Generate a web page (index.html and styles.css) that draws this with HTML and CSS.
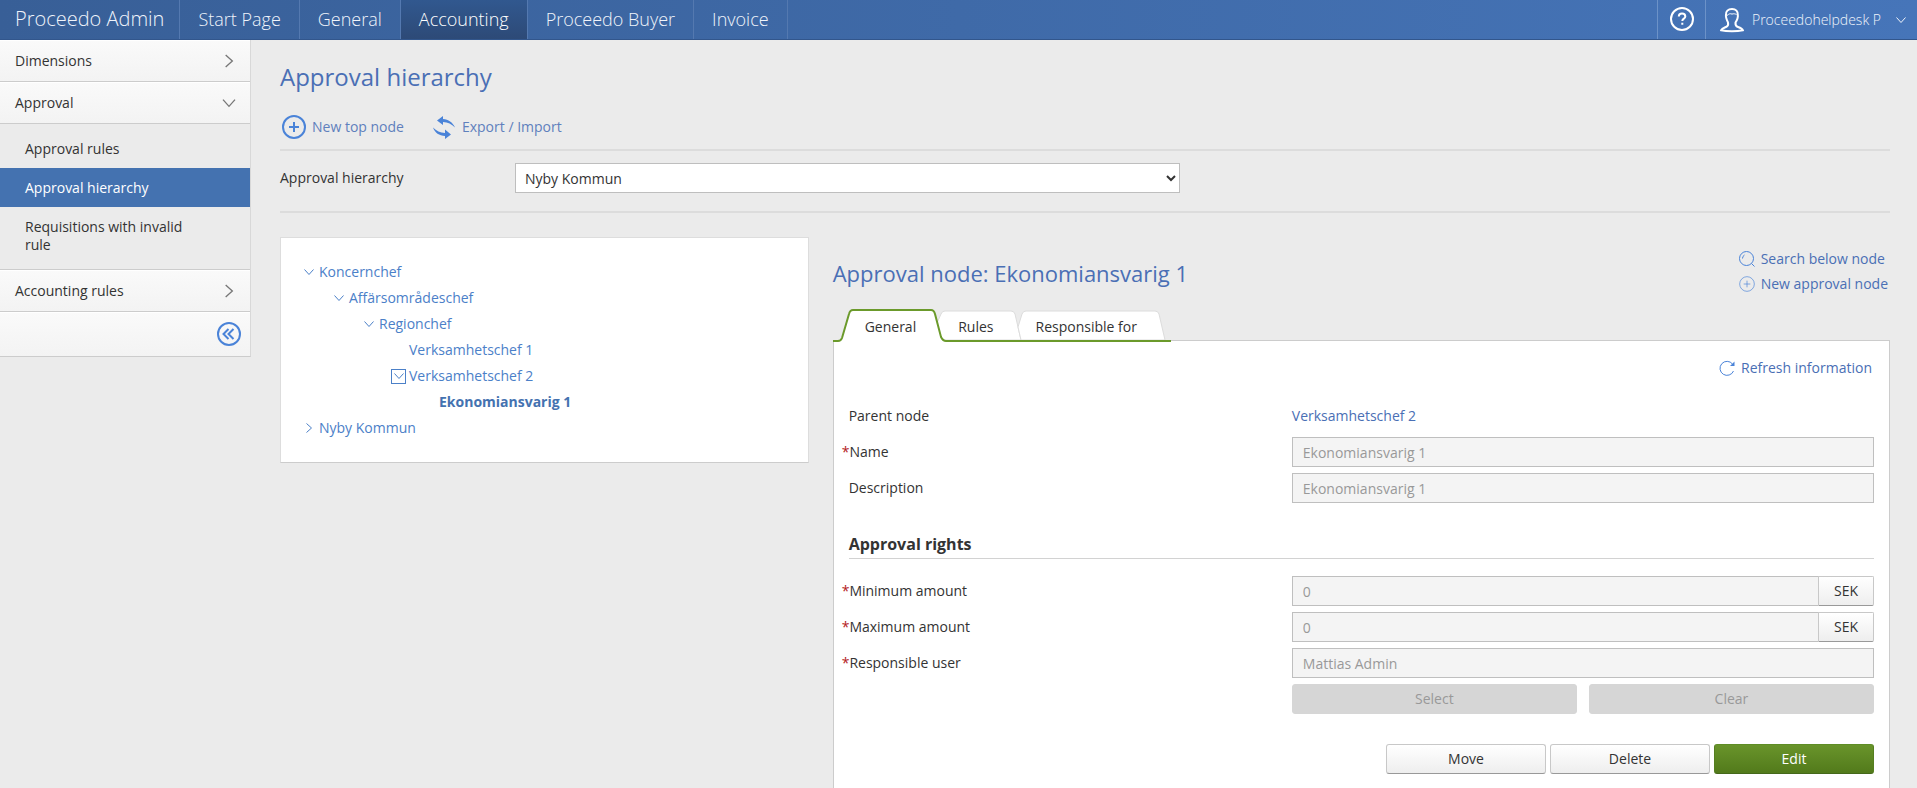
FILE: index.html
```html
<!DOCTYPE html>
<html lang="en">
<head>
<meta charset="utf-8">
<title>Approval hierarchy - Proceedo Admin</title>
<link rel="stylesheet" href="styles.css">
</head>
<body>
<svg class="sprite" aria-hidden="true">
  <symbol id="down" viewBox="0 0 12 12"><path d="M1.5 3.5 6 8.5l4.500-5"/></symbol>
  <symbol id="right" viewBox="0 0 12 12"><path d="M3.500 1.500 8.500 6l-5 4.500"/></symbol>
  <symbol id="plus" viewBox="0 0 24 24"><circle cx="12" cy="12" r="11"/><path d="M12 7v10M7 12h10"/></symbol>
</svg>
<header class="topbar">
  <a class="brand" href="#">Proceedo Admin</a>
  <nav class="topnav" aria-label="Main">
    <a href="#">Start Page</a>
    <a href="#">General</a>
    <a class="current" href="#" aria-current="page">Accounting</a>
    <a href="#">Proceedo Buyer</a>
    <a href="#">Invoice</a>
  </nav>
  <button class="help" type="button" aria-label="Help">
    <svg class="icon-24" viewBox="0 0 24 24"><circle cx="12" cy="12" r="11"/><path d="M8.800 9.500C8.800 7.600 10.200 6.500 12 6.500s3.300 1.200 3.300 2.900c0 2.200-3 2.300-3 4.600M12.300 15.800v2"/></svg>
  </button>
  <button class="user" type="button">
    <svg class="icon-24" viewBox="0 0 24 24"><path d="M8 14.500C6.500 11.500 5.500 9 6 6.800 5.600 3.500 8 1 12 1s6 2.500 5.800 5.800c.4 2.400-.6 5-2.300 7.700-.3 2.500.2 3.700 2.500 4.500 2.500.9 4.200 1.600 4.800 3.200-3 .7-6.500 1-10.800 1s-8-.3-10.800-1C1.800 20.500 3.500 20 6 19c2.200-.8 2.600-2 2-4.500z"/><path class="thin" d="M7 7.500c2-1.700 3-2.200 5-1.400 1.800-.6 3-.3 4.500.4"/></svg>
    <span>Proceedohelpdesk P</span>
    <svg class="icon-12 user-arrow"><use href="#down"/></svg>
  </button>
</header>

<div class="page">
  <nav class="sidebar" aria-label="Accounting">
    <button class="side-item" type="button">Dimensions<svg class="icon-16"><use href="#right"/></svg></button>
    <button class="side-item" type="button" aria-expanded="true">Approval<svg class="icon-16"><use href="#down"/></svg></button>
    <div class="submenu">
      <a href="#">Approval rules</a>
      <a class="active" href="#">Approval hierarchy</a>
      <a href="#">Requisitions with invalid rule</a>
    </div>
    <button class="side-item" type="button">Accounting rules<svg class="icon-16"><use href="#right"/></svg></button>
    <div class="side-foot">
      <button class="collapse" type="button" aria-label="Collapse menu">
        <svg class="icon-24" viewBox="0 0 24 24"><circle cx="12" cy="12" r="11"/><path d="M11.500 7 6.500 12l5 5M16.500 7l-5 5 5 5"/></svg>
      </button>
    </div>
  </nav>

  <main class="main">
    <h1>Approval hierarchy</h1>
    <div class="toolbar">
      <button class="action" type="button"><svg class="icon-24"><use href="#plus"/></svg>New top node</button>
      <button class="action" type="button"><svg class="icon-24 sync" viewBox="0 0 24 24"><path d="M5 5.500 11 1v3c5.500.5 9.500 3 12 8.500C19.500 9 16 7.300 11 7v3z"/><path d="M19 19.500 13 24v-3C7 20.500 3 18 1 12.500 4.500 16 8 17.700 13 18v-3.500z"/></svg>Export / Import</button>
    </div>
    <div class="picker">
      <label for="hierarchy">Approval hierarchy</label>
      <select id="hierarchy"><option>Nyby Kommun</option></select>
    </div>

    <div class="columns">
      <ul class="tree">
        <li class="level-0"><button class="toggle" type="button" aria-label="Collapse"><svg class="icon-12"><use href="#down"/></svg></button><a href="#">Koncernchef</a></li>
        <li class="level-1"><button class="toggle" type="button" aria-label="Collapse"><svg class="icon-12"><use href="#down"/></svg></button><a href="#">Affärsområdeschef</a></li>
        <li class="level-2"><button class="toggle" type="button" aria-label="Collapse"><svg class="icon-12"><use href="#down"/></svg></button><a href="#">Regionchef</a></li>
        <li class="level-3"><span class="toggle"></span><a href="#">Verksamhetschef 1</a></li>
        <li class="level-3"><button class="toggle boxed" type="button" aria-label="Collapse"><svg class="icon-12"><use href="#down"/></svg></button><a href="#">Verksamhetschef 2</a></li>
        <li class="level-4"><span class="toggle"></span><a class="selected" href="#">Ekonomiansvarig 1</a></li>
        <li class="level-0"><button class="toggle" type="button" aria-label="Expand"><svg class="icon-12"><use href="#right"/></svg></button><a href="#">Nyby Kommun</a></li>
      </ul>

      <section class="node">
        <div class="node-head">
          <h2>Approval node: Ekonomiansvarig 1</h2>
          <div class="node-links">
            <a href="#"><svg class="icon-16" viewBox="0 0 16 16"><circle cx="7.500" cy="7.500" r="7"/><path d="M12.500 12.500l3 3M3.500 7.500a4 4 0 0 1 2-3.500"/></svg>Search below node</a>
            <a href="#"><svg class="icon-16"><use href="#plus"/></svg>New approval node</a>
          </div>
        </div>
        <div class="tabs" role="tablist">
          <svg class="tab-shape" viewBox="0 0 338 33" width="338" height="33" aria-hidden="true">
            <path class="tab-idle" d="M104 31V14L108 5Q109 2 112 2H178Q181 2 182 5L188 31z"/>
            <path class="tab-idle" d="M188 31 185 18 189 5Q190 2 193 2H322Q325 2 326 5L332 31z"/>
            <path class="tab-live" d="M0 32H5Q8 32 9 29L16 5Q17 1 20 1H98Q101 1 102 5L108 28Q110 32 113 32H338"/>
          </svg>
          <button type="button" role="tab" aria-selected="true">General</button>
          <button type="button" role="tab" aria-selected="false">Rules</button>
          <button type="button" role="tab" aria-selected="false">Responsible for</button>
        </div>
        <form class="panel">
          <a class="refresh" href="#"><svg class="icon-16" viewBox="0 0 16 16"><path d="M13.500 4A7 7 0 1 0 14.500 11"/><path class="solid" d="M15.500 1.500v4.500h-4.500z"/></svg>Refresh information</a>
          <div class="row"><span>Parent node</span><a href="#">Verksamhetschef 2</a></div>
          <div class="row"><label class="required" for="name">Name</label><input id="name" type="text" value="Ekonomiansvarig 1" disabled></div>
          <div class="row"><label for="desc">Description</label><input id="desc" type="text" value="Ekonomiansvarig 1" disabled></div>
          <h3>Approval rights</h3>
          <div class="row"><label class="required" for="min">Minimum amount</label><div class="money"><input id="min" type="text" value="0" disabled><button class="btn" type="button">SEK</button></div></div>
          <div class="row"><label class="required" for="max">Maximum amount</label><div class="money"><input id="max" type="text" value="0" disabled><button class="btn" type="button">SEK</button></div></div>
          <div class="row"><label class="required" for="resp">Responsible user</label><input id="resp" type="text" value="Mattias Admin" disabled></div>
          <div class="row"><span></span><div class="pair"><button class="btn" type="button" disabled>Select</button><button class="btn" type="button" disabled>Clear</button></div></div>
          <div class="actions">
            <button class="btn" type="button">Move</button>
            <button class="btn" type="button">Delete</button>
            <button class="btn primary" type="button">Edit</button>
          </div>
        </form>
      </section>
    </div>
  </main>
</div>
</body>
</html>
```

FILE: styles.css
```css
* { box-sizing: border-box; }

body {
  margin: 0;
  min-height: 100vh;
  display: flex;
  flex-direction: column;
  background: #ebebeb;
  color: #333;
  font: 14px/18px "Open Sans", "Noto Sans", sans-serif;
}

button, input, select { font: inherit; color: inherit; }
button { border: 0; padding: 0; background: none; cursor: pointer; }
a { color: #4a6fb5; text-decoration: none; }
h1, h2, h3 { margin: 0; }

svg { flex: none; fill: none; stroke: currentColor; overflow: visible; }
.sprite { position: absolute; width: 0; height: 0; }
.icon-12 { width: 12px; height: 12px; }
.icon-16 { width: 16px; height: 16px; }
.icon-24 { width: 24px; height: 24px; stroke-width: 2; }
.thin { stroke-width: 1; }

/* Top bar */
.topbar {
  display: flex;
  height: 40px;
  border-bottom: 1px solid #32568c;
  background: linear-gradient(90deg, #385f97, #4675b9);
  color: #e8eef8;
}
.brand, .topnav a {
  display: flex;
  align-items: center;
  padding-bottom: 2px;
  color: #f0f4fb;
  font-weight: 300;
  border-right: 1px solid #5479b0;
}
.brand { padding: 0 15px 2px; font-size: 20px; }
.topnav { display: flex; flex: 1; font-size: 18px; }
.topnav a { padding: 0 18px 2px; }
.topnav .current { background: linear-gradient(#31588f, #2d4a77); color: #fff; }
.help, .user {
  display: flex;
  align-items: center;
  border-left: 1px solid #6c92c8;
}
.help { padding: 0 11px 1px 12px; color: #fff; }
.user { gap: 8px; padding: 0 10px 0 14px; font-weight: 300; color: #f0f4fb; }
.user > .icon-24 { color: #fff; }
.user-arrow { margin-left: 6px; }

/* Layout */
.page { display: flex; flex: 1; align-items: stretch; }

.sidebar {
  align-self: flex-start;
  flex: none;
  width: 251px;
  border-right: 1px solid #d8d8d8;
  border-bottom: 1px solid #ccc;
}
.side-item, .side-foot {
  display: flex;
  align-items: center;
  justify-content: space-between;
  width: 100%;
  background: linear-gradient(#fafafa, #f3f3f3);
  box-shadow: inset 0 1px #fff;
}
.side-item { height: 42px; padding: 0 13px 0 15px; border-bottom: 1px solid #ccc; }
.side-item svg { color: #777; stroke-width: 1; }
.side-foot { height: 44px; padding: 0 9px; justify-content: flex-end; }
.collapse { display: flex; color: #4a83d8; }
.submenu { padding: 5px 0; border-bottom: 1px solid #ccc; }
.submenu a { display: block; padding: 11px 50px 10px 25px; color: #333; }
.submenu .active { background: #4472b0; color: #fff; font-weight: 500; }

.main { display: flex; flex: 1; flex-direction: column; padding: 0 27px 0 29px; }
h1, h2 { color: #4a6fb5; line-height: 32px; font-weight: 400; }
h1 { padding-top: 21px; font-size: 24px; }
h2 { font-size: 22px; }

.toolbar {
  display: flex;
  gap: 28px;
  padding: 22px 0 10px 2px;
  border-bottom: 2px solid #dcdcdc;
}
.action { display: flex; align-items: center; gap: 6px; color: #5f80bd; }
.action svg { color: #4a83d8; }
.sync { fill: currentColor; stroke: none; }

.picker {
  display: grid;
  grid-template-columns: 235px 665fr 710fr;
  align-items: center;
  padding: 12px 0 18px;
  border-bottom: 2px solid #dcdcdc;
}
.picker select { height: 30px; padding: 0 5px; border: 1px solid #bebebe; border-radius: 0; background: #fff; }

.columns { display: grid; flex: 1; grid-template-columns: 1fr 2fr; gap: 24px; padding-top: 24px; }

/* Tree */
.tree {
  align-self: start;
  margin: 0;
  padding: 21px;
  list-style: none;
  background: #fff;
  border: 1px solid #ddd;
  border-bottom-color: #ccc;
}
.tree li { display: flex; align-items: center; gap: 4px; height: 26px; }
.tree a { color: #4b80c8; }
.tree .selected { color: #4472b0; font-weight: 700; }
.toggle { display: flex; width: 13px; height: 13px; align-items: center; justify-content: center; color: #4b80c8; }
.boxed { outline: 1px solid #4b80c8; }
.level-1 { margin-left: 30px; }
.level-2 { margin-left: 60px; }
.level-3 { margin-left: 90px; }
.level-4 { margin-left: 120px; }

/* Approval node */
.node { display: flex; flex-direction: column; }
.node-head { display: flex; align-items: flex-start; justify-content: space-between; height: 72px; padding-top: 13px; }
.node-head h2 { padding-top: 7px; }
.node-links { display: flex; flex-direction: column; gap: 7px; padding-right: 2px; }
.node-links a, .refresh { display: flex; align-items: center; gap: 6px; }
.node-links svg, .refresh svg { color: #4a83d8; }
.solid { fill: currentColor; stroke: none; }

.tabs { position: relative; display: flex; height: 33px; margin-bottom: -2px; padding-left: 11px; }
.tabs button { position: relative; padding: 2px 21px 0; }
.tab-shape { position: absolute; left: 0; top: 0; }
.tab-idle { fill: #fff; stroke: #dcdcdc; }
.tab-live { fill: #fff; stroke: #6b9a2b; stroke-width: 2; }

.panel { flex: 1; padding: 18px 15px 12px; background: #fff; border: 1px solid #ccc; border-bottom: 0; }
.refresh { justify-content: flex-end; padding: 0 2px 24px 0; }
.row { display: grid; grid-template-columns: 443fr 582fr; align-items: center; min-height: 30px; margin-bottom: 6px; }
.required::before { content: "*"; margin-left: -7px; color: #b3201d; }

.row input {
  width: 100%;
  min-width: 0;
  height: 30px;
  padding: 0 10px;
  border: 1px solid #bfbfbf;
  background: #f4f4f4;
  color: #999;
}
.money { display: flex; }
.money input { flex: 1; border-right: 0; }
.money .btn { width: 56px; border-radius: 0 2px 2px 0; }

h3 { margin: 30px 0 17px; padding-bottom: 3px; border-bottom: 1px solid #d2d2d2; font-size: 16px; line-height: 22px; font-weight: 700; }

.btn {
  height: 30px;
  border: 1px solid #c8c8c8;
  border-bottom-color: #999;
  border-radius: 3px;
  background: linear-gradient(#fff, #eee);
}
.btn:disabled { border-color: #d6d6d6; background: #d6d6d6; color: #999; }
.pair { display: grid; grid-template-columns: 1fr 1fr; gap: 12px; }
.actions { display: flex; justify-content: flex-end; gap: 4px; padding-top: 24px; }
.actions .btn { width: 160px; }
.btn.primary { border-color: #5f8d26 #557f20 #44681a; background: linear-gradient(#69942b, #527a1b); color: #fff; }
```
